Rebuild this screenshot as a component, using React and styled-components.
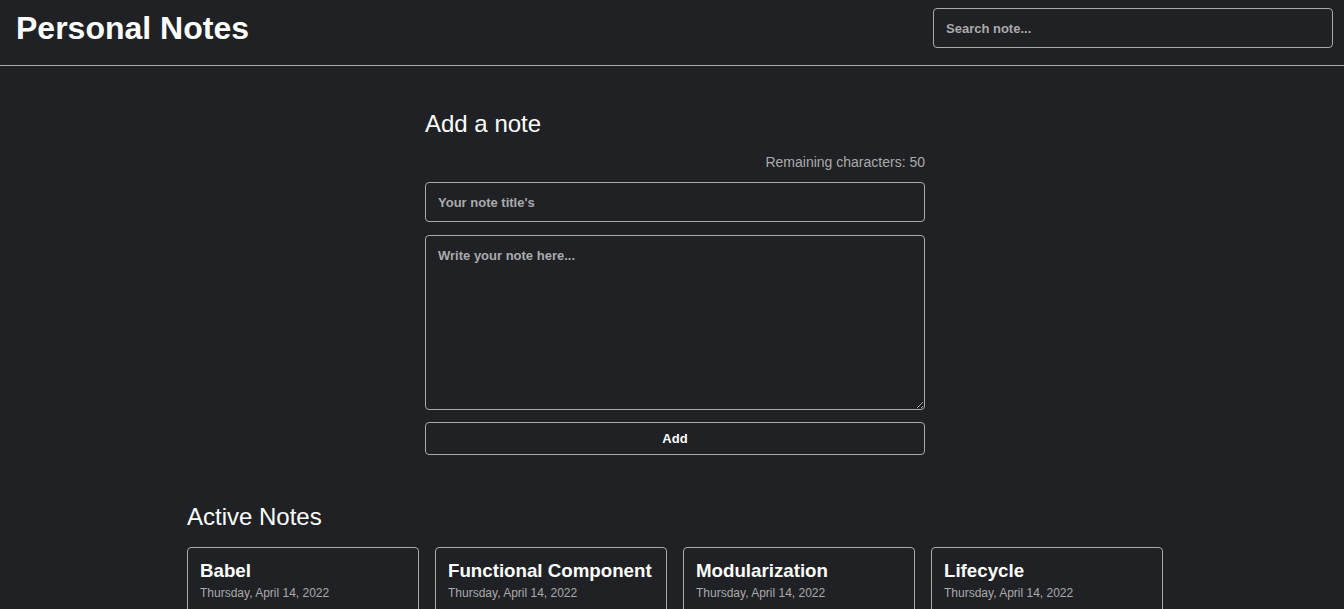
import React, { useState } from "react";
import styled, { createGlobalStyle } from "styled-components";

const GlobalStyle = createGlobalStyle`
  * { box-sizing: border-box; }
  html, body { margin: 0; padding: 0; }
  body {
    background: #202125;
    color: #ffffff;
    font-family: "Liberation Sans", Arial, sans-serif;
  }
`;

const Page = styled.div`
  min-height: 609px;
  background: #202125;
`;

const Header = styled.header`
  display: flex;
  align-items: center;
  justify-content: space-between;
  height: 66px;
  padding: 8px 11px 17px 16px;
  border-bottom: 1px solid #aaaaaa;
`;

const Brand = styled.h1`
  margin: 0;
  font-size: 32px;
  line-height: 40px;
  font-weight: 700;
  color: #ffffff;
`;

const Field = styled.input`
  display: block;
  width: ${(p) => p.$width || "100%"};
  height: 40px;
  padding: 0 12px;
  background: transparent;
  border: 1px solid #aaaaaa;
  border-radius: 4px;
  color: #ffffff;
  font-family: "Liberation Sans", Arial, sans-serif;
  font-size: 13px;
  font-weight: 700;
  outline: none;
  &::placeholder { color: #aaaaaa; opacity: 1; }
`;

const Main = styled.main`
  display: flex;
  flex-direction: column;
  align-items: center;
  padding: 44px 0 0 6px;
`;

const NoteForm = styled.section`
  display: flex;
  flex-direction: column;
  width: 500px;
`;

const SectionTitle = styled.h2`
  margin: 0;
  font-size: 24px;
  line-height: 28px;
  font-weight: 400;
  color: #ffffff;
`;

const Counter = styled.p`
  margin: 16px 0 12px;
  text-align: right;
  font-size: 14px;
  line-height: 16px;
  color: #aaaaaa;
`;

const TextArea = styled.textarea`
  display: block;
  width: 100%;
  height: 175px;
  margin-top: 13px;
  padding: 12px;
  background: transparent;
  border: 1px solid #aaaaaa;
  border-radius: 4px;
  color: #ffffff;
  font-family: "Liberation Sans", Arial, sans-serif;
  font-size: 13px;
  font-weight: 700;
  resize: vertical;
  outline: none;
  &::placeholder { color: #aaaaaa; opacity: 1; }
`;

const AddButton = styled.button`
  display: block;
  width: 100%;
  height: 33px;
  margin-top: 12px;
  background: transparent;
  border: 1px solid #aaaaaa;
  border-radius: 4px;
  color: #ffffff;
  font-family: "Liberation Sans", Arial, sans-serif;
  font-size: 13px;
  font-weight: 700;
  cursor: pointer;
`;

const NotesSection = styled.section`
  width: 976px;
  margin-top: 48px;
`;

const NotesGrid = styled.div`
  display: grid;
  grid-template-columns: repeat(4, 232px);
  gap: 16px;
  margin-top: 16px;
`;

const Card = styled.article`
  border: 1px solid #aaaaaa;
  border-radius: 4px;
  padding: 11px 12px 12px;
  min-height: 140px;
`;

const CardTitle = styled.h3`
  margin: 0;
  font-size: 18.72px;
  line-height: 23px;
  font-weight: 700;
  color: #ffffff;
  white-space: nowrap;
`;

const CardDate = styled.p`
  margin: 4px 0 0;
  font-size: 12px;
  line-height: 14px;
  color: #aaaaaa;
`;

const notes = [
  "Babel",
  "Functional Component",
  "Modularization",
  "Lifecycle",
];

export default function App() {
  const [title, setTitle] = useState("");
  return (
    <Page>
      <GlobalStyle />
      <Header>
        <Brand>Personal Notes</Brand>
        <Field $width="400px" placeholder="Search note..." />
      </Header>
      <Main>
        <NoteForm>
          <SectionTitle>Add a note</SectionTitle>
          <Counter>Remaining characters: {50 - title.length}</Counter>
          <Field
            placeholder="Your note title's"
            value={title}
            onChange={(e) => setTitle(e.target.value.slice(0, 50))}
          />
          <TextArea placeholder="Write your note here..." />
          <AddButton type="button">Add</AddButton>
        </NoteForm>
        <NotesSection>
          <SectionTitle>Active Notes</SectionTitle>
          <NotesGrid>
            {notes.map((n) => (
              <Card key={n}>
                <CardTitle>{n}</CardTitle>
                <CardDate>Thursday, April 14, 2022</CardDate>
              </Card>
            ))}
          </NotesGrid>
        </NotesSection>
      </Main>
    </Page>
  );
}
